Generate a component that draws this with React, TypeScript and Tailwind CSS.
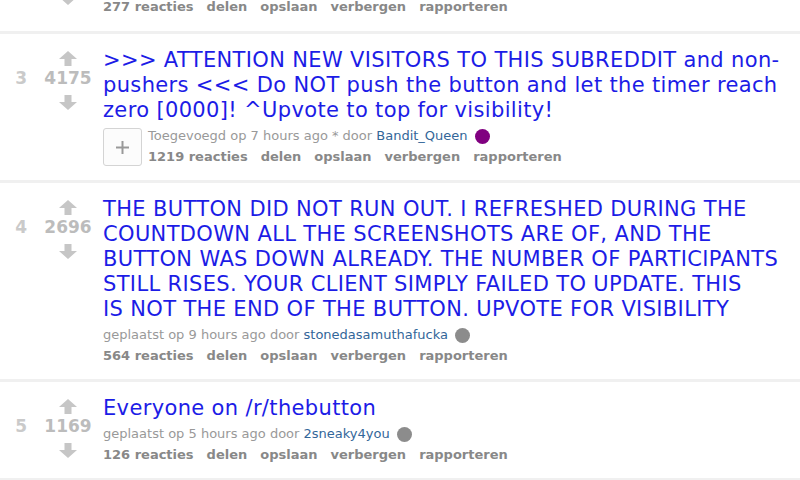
import React from "react";

interface IPostProps {
  rank: number;
  score: number;
  lines: string[];
  verb: string;
  age: string;
  author: string;
  dot: string;
  comments: number;
  expando?: boolean;
}

const font = { fontFamily: '"DejaVu Sans", Verdana, sans-serif' };

function Arrow({ down = false }: { down?: boolean }) {
  return (
    <svg
      width="18"
      height="15"
      viewBox="0 0 18 15"
      className={down ? "rotate-180 block" : "block"}
    >
      <polygon points="9,0 18,8 12.5,8 12.5,15 5.5,15 5.5,8 0,8" fill="#c6c6c6" />
    </svg>
  );
}

function Actions({ comments }: { comments: number }) {
  return (
    <div className="flex gap-[13px] text-[13px] font-bold leading-[22px] text-[#888] whitespace-nowrap">
      <span>{comments} reacties</span>
      <span>delen</span>
      <span>opslaan</span>
      <span>verbergen</span>
      <span>rapporteren</span>
    </div>
  );
}

function Separator() {
  return <div className="h-[3px] bg-[#f0f0f0]" />;
}

function Post({
  rank,
  score,
  lines,
  verb,
  age,
  author,
  dot,
  comments,
  expando = false,
}: Readonly<IPostProps>) {
  const meta = (
    <div>
      <div className="flex items-center text-[13px] leading-[20px] text-[#999] whitespace-nowrap">
        <span>
          {verb} op {age} ago {expando ? "* " : ""}door{" "}
          <span className="text-[#369]">{author}</span>
        </span>
        <span
          className="ml-[7px] inline-block h-[15px] w-[15px] rounded-full"
          style={{ backgroundColor: dot }}
        />
      </div>
      <Actions comments={comments} />
    </div>
  );

  return (
    <div className="flex pt-[14px] pb-[12px]">
      <div className="w-[30px] pr-[3px] pt-[20px] text-right text-[17px] font-bold leading-[20px] text-[#cacaca]">
        {rank}
      </div>
      <div className="ml-[10px] flex w-[56px] flex-col items-center pt-[3px]">
        <Arrow />
        <div className="mt-[2px] text-[17px] font-bold leading-[20px] text-[#bcbcbc]">
          {score}
        </div>
        <div className="mt-[7px]">
          <Arrow down />
        </div>
      </div>
      <div className="ml-[7px] min-w-0 flex-1">
        <div className="text-[21px] leading-[25px] tracking-[0.35px] text-[#1c1ce6]">
          {lines.map((line) => (
            <div key={line} className="whitespace-nowrap">
              {line}
            </div>
          ))}
        </div>
        <div className="mt-[3px]">
          {expando ? (
            <div className="flex items-center gap-[6px]">
              <div className="flex h-[38px] w-[39px] items-center justify-center rounded-[3px] border border-[#d4d4d4] bg-[#fcfcfc]">
                <svg width="13" height="13" viewBox="0 0 13 13">
                  <path d="M6.5 0v13M0 6.5h13" stroke="#999" strokeWidth="2" />
                </svg>
              </div>
              {meta}
            </div>
          ) : (
            meta
          )}
        </div>
      </div>
    </div>
  );
}

export default function App() {
  return (
    <div className="h-[480px] w-[800px] overflow-hidden bg-white" style={font}>
      <div className="flex pb-[13px]">
        <div className="w-[30px]" />
        <div className="ml-[10px] flex w-[56px] justify-center">
          <div className="-mt-[10px]">
            <Arrow down />
          </div>
        </div>
        <div className="ml-[7px] -mt-[4px]">
          <Actions comments={277} />
        </div>
      </div>
      <Separator />
      <Post
        rank={3}
        score={4175}
        lines={[
          ">>> ATTENTION NEW VISITORS TO THIS SUBREDDIT and non-",
          "pushers <<< Do NOT push the button and let the timer reach",
          "zero [0000]! ^Upvote to top for visibility!",
        ]}
        verb="Toegevoegd"
        age="7 hours"
        author="Bandit_Queen"
        dot="#800080"
        comments={1219}
        expando
      />
      <Separator />
      <Post
        rank={4}
        score={2696}
        lines={[
          "THE BUTTON DID NOT RUN OUT. I REFRESHED DURING THE",
          "COUNTDOWN ALL THE SCREENSHOTS ARE OF, AND THE",
          "BUTTON WAS DOWN ALREADY. THE NUMBER OF PARTICIPANTS",
          "STILL RISES. YOUR CLIENT SIMPLY FAILED TO UPDATE. THIS",
          "IS NOT THE END OF THE BUTTON. UPVOTE FOR VISIBILITY",
        ]}
        verb="geplaatst"
        age="9 hours"
        author="stonedasamuthafucka"
        dot="#8c8c8c"
        comments={564}
      />
      <Separator />
      <Post
        rank={5}
        score={1169}
        lines={["Everyone on /r/thebutton"]}
        verb="geplaatst"
        age="5 hours"
        author="2sneaky4you"
        dot="#8c8c8c"
        comments={126}
      />
      <Separator />
    </div>
  );
}
